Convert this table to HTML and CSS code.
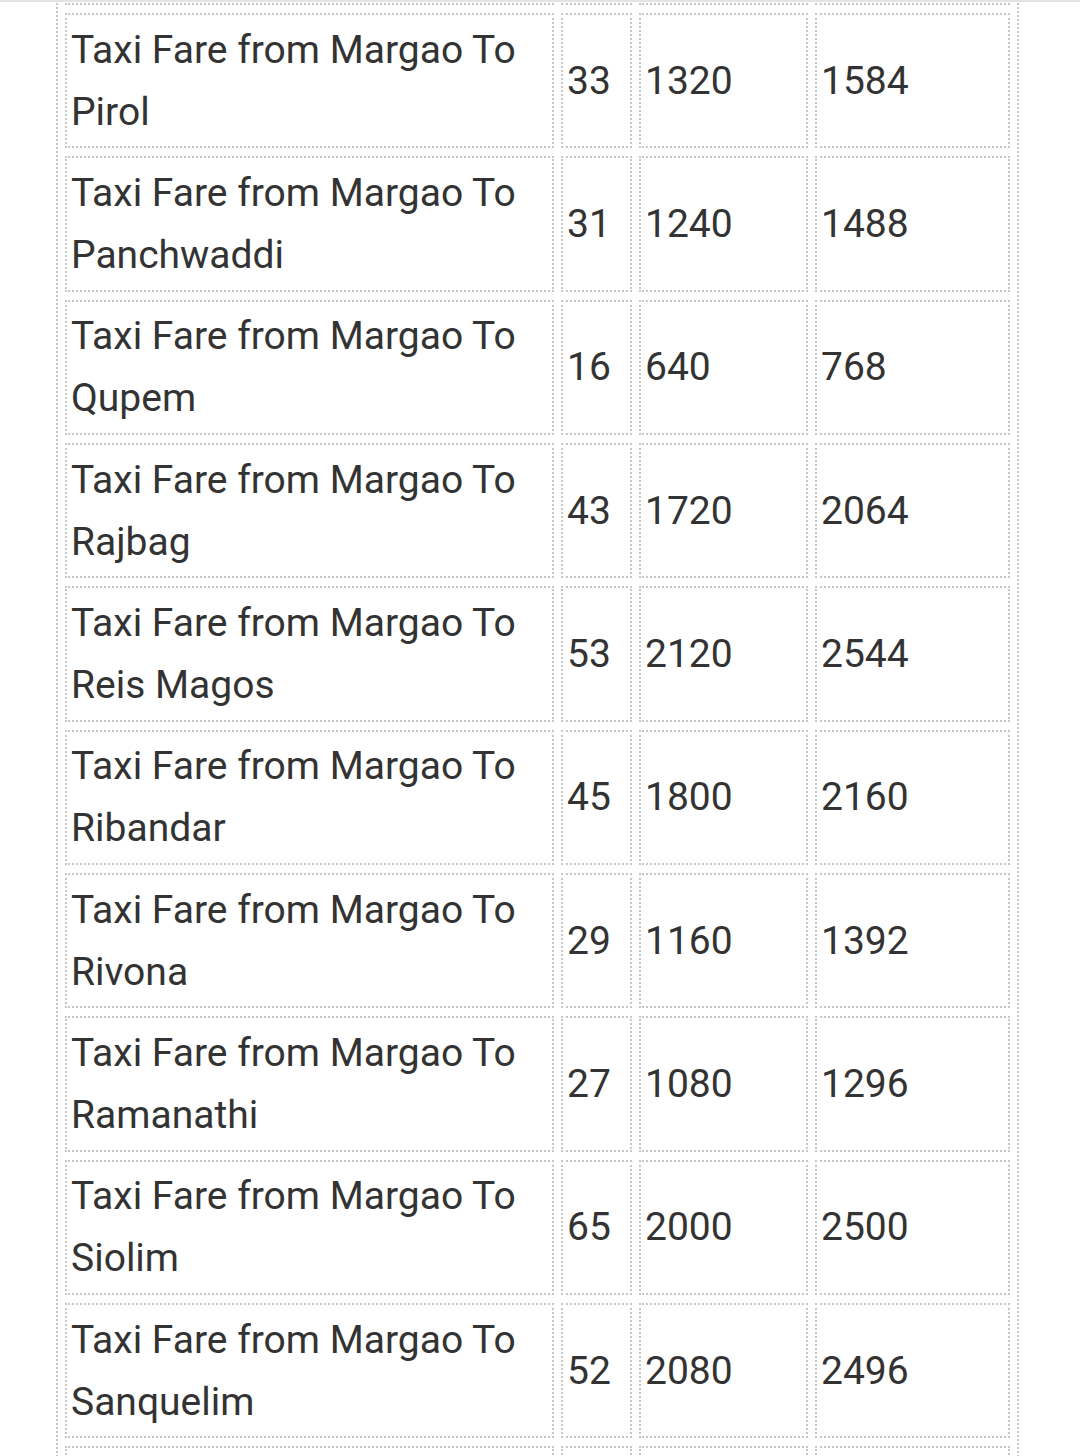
FILE: index.html
```html
<!DOCTYPE html>
<html lang="en">
<head>
    <meta charset="UTF-8">
    <meta name="viewport" content="width=device-width, initial-scale=1.0">
    <title>Taxi Fare from Margao</title>
    <link rel="stylesheet" href="styles.css">
</head>
<body>
    <div class="page">
        <table class="fare-table">
            <tr class="row-above">
                <td class="place"></td>
                <td class="km"></td>
                <td class="fare"></td>
                <td class="fare-ac"></td>
            </tr>
            <tr>
                <td class="place">Taxi Fare from Margao To Pirol</td>
                <td class="km">33</td>
                <td class="fare">1320</td>
                <td class="fare-ac">1584</td>
            </tr>
            <tr>
                <td class="place">Taxi Fare from Margao To Panchwaddi</td>
                <td class="km">31</td>
                <td class="fare">1240</td>
                <td class="fare-ac">1488</td>
            </tr>
            <tr>
                <td class="place">Taxi Fare from Margao To Qupem</td>
                <td class="km">16</td>
                <td class="fare">640</td>
                <td class="fare-ac">768</td>
            </tr>
            <tr>
                <td class="place">Taxi Fare from Margao To Rajbag</td>
                <td class="km">43</td>
                <td class="fare">1720</td>
                <td class="fare-ac">2064</td>
            </tr>
            <tr>
                <td class="place">Taxi Fare from Margao To Reis Magos</td>
                <td class="km">53</td>
                <td class="fare">2120</td>
                <td class="fare-ac">2544</td>
            </tr>
            <tr>
                <td class="place">Taxi Fare from Margao To Ribandar</td>
                <td class="km">45</td>
                <td class="fare">1800</td>
                <td class="fare-ac">2160</td>
            </tr>
            <tr>
                <td class="place">Taxi Fare from Margao To Rivona</td>
                <td class="km">29</td>
                <td class="fare">1160</td>
                <td class="fare-ac">1392</td>
            </tr>
            <tr>
                <td class="place">Taxi Fare from Margao To Ramanathi</td>
                <td class="km">27</td>
                <td class="fare">1080</td>
                <td class="fare-ac">1296</td>
            </tr>
            <tr>
                <td class="place">Taxi Fare from Margao To Siolim</td>
                <td class="km">65</td>
                <td class="fare">2000</td>
                <td class="fare-ac">2500</td>
            </tr>
            <tr>
                <td class="place">Taxi Fare from Margao To Sanquelim</td>
                <td class="km">52</td>
                <td class="fare">2080</td>
                <td class="fare-ac">2496</td>
            </tr>
            <tr class="row-below">
                <td class="place"></td>
                <td class="km"></td>
                <td class="fare"></td>
                <td class="fare-ac"></td>
            </tr>
        </table>
    </div>
</body>
</html>
```

FILE: styles.css
```css
body {
    font-family: Roboto, "Liberation Sans", sans-serif;
    margin: 0;
    padding: 0;
    background-color: #fff;
    color: #333;
}
.page {
    height: 1454px;
    overflow: hidden;
    border-top: 2px solid #e2e2e2;
}
.fare-table {
    table-layout: fixed;
    width: 963px;
    margin: -142.33px 0 0 56px;
    border: 2px dotted #c6c6c6;
    border-spacing: 7px 8px;
    font-size: 39px;
    line-height: 62.17px;
}
.fare-table td {
    box-sizing: border-box;
    border: 2px dotted #c6c6c6;
    padding: 3.5px 4px;
    vertical-align: middle;
    text-align: left;
}
.row-above td,
.row-below td {
    height: 135.33px;
}
.place {
    width: 489px;
}
.km {
    width: 71px;
}
.fare {
    width: 169px;
}
.fare-ac {
    width: 195px;
}
```
